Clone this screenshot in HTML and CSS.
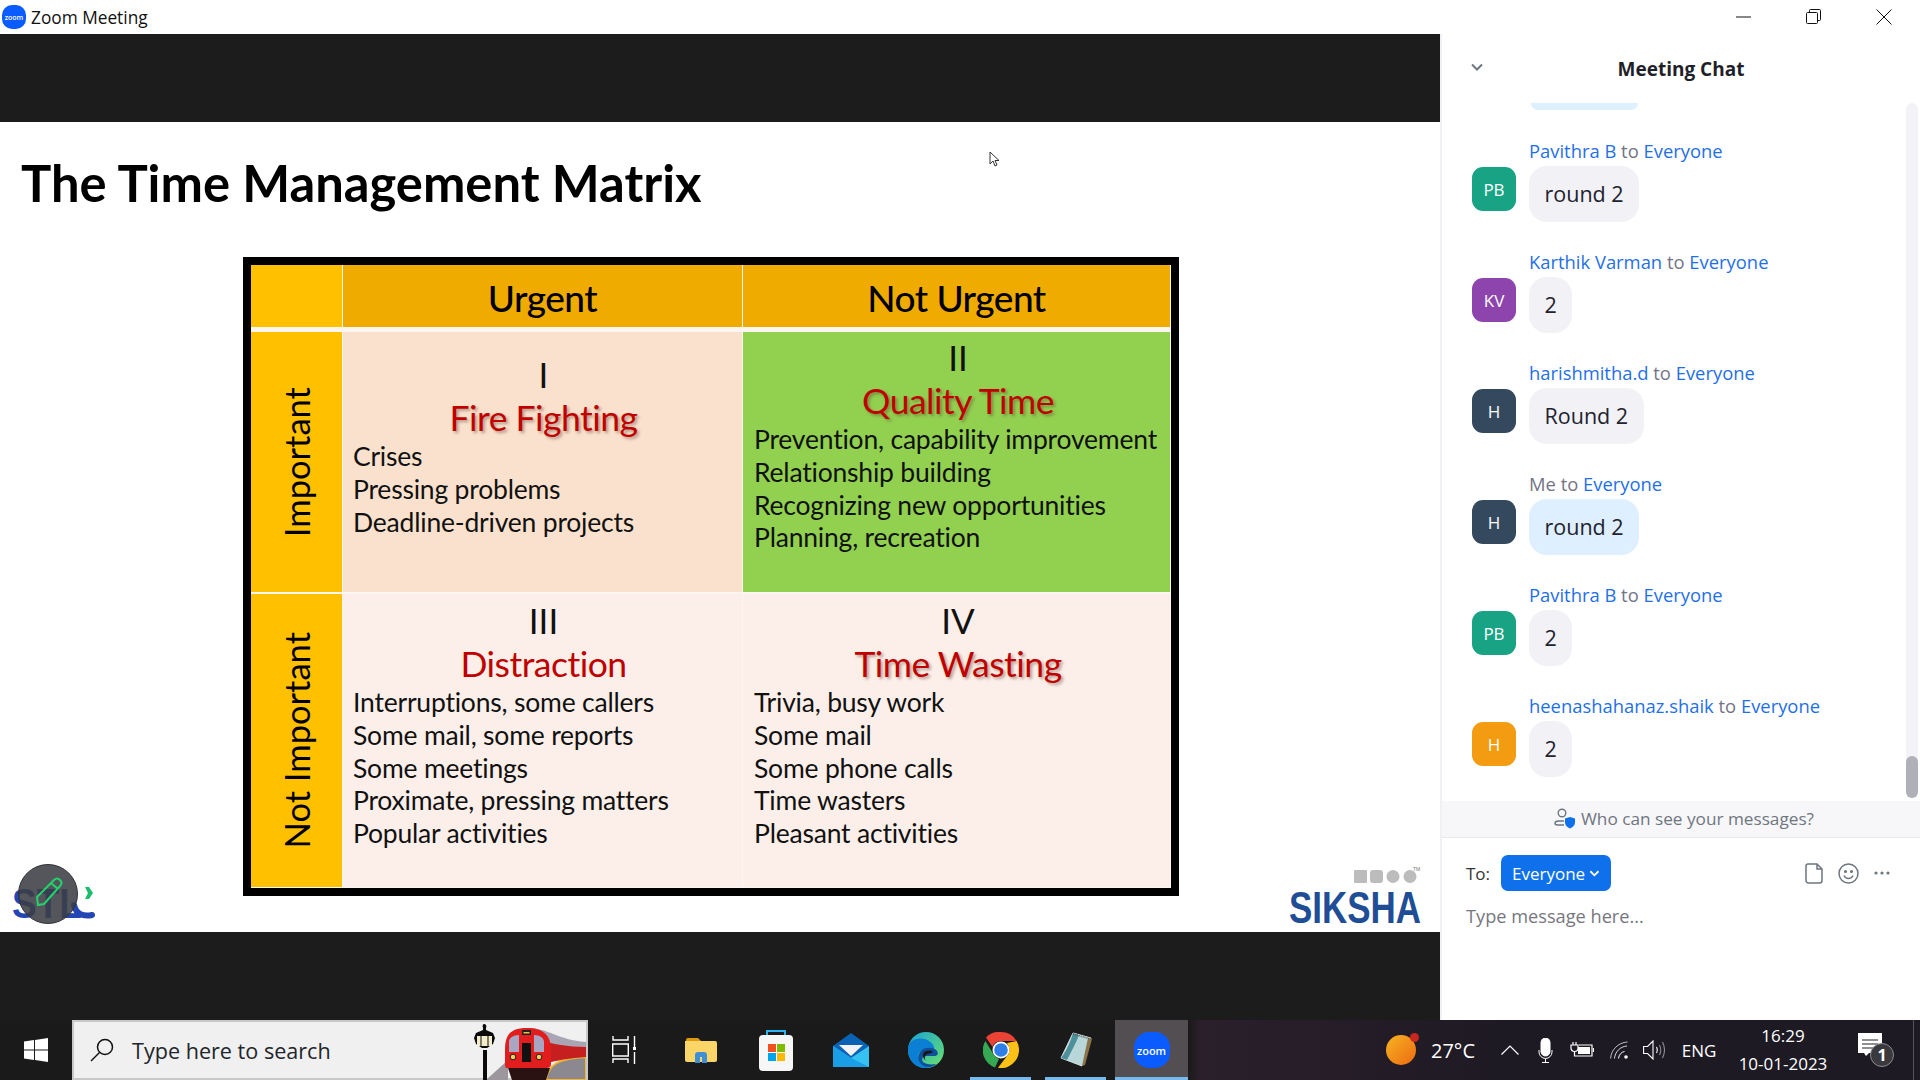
FILE: index.html
```html
<!DOCTYPE html>
<html lang="en"><head>
    <meta charset="UTF-8">
    <meta name="viewport" content="width=device-width, initial-scale=1.0">
    <title>Zoom Meeting</title>
    <link rel="stylesheet" href="styles.css">
</head>
<body>
<div class="app">
    <header class="titlebar">
        <div class="zoom-mark"><span>zoom</span></div>
        <span class="window-title">Zoom Meeting</span>
        <div class="window-controls">
            <button class="win-btn"><svg width="16" height="16" viewBox="0 0 16 16"><path d="M0 8h15" stroke="#111" stroke-width="1"/></svg></button>
            <button class="win-btn"><svg width="16" height="16" viewBox="0 0 16 16" fill="none" stroke="#111"><rect x="0.5" y="3.5" width="11" height="11" rx="1"/><path d="M3.5 3V1.5a1 1 0 0 1 1-1h9a1 1 0 0 1 1 1v9a1 1 0 0 1-1 1H12"/></svg></button>
            <button class="win-btn"><svg width="16" height="16" viewBox="0 0 16 16" fill="none" stroke="#111"><path d="M0.5 0.5l15 15M15.5 0.5l-15 15"/></svg></button>
        </div>
    </header>

    <main class="stage">
        <div class="black-band"></div>
        <section class="slide">
            <h1 class="slide-title">The Time Management Matrix</h1>
            <div class="matrix">
                <div class="corner"></div>
                <div class="col-head">Urgent</div>
                <div class="col-head">Not Urgent</div>

                <div class="row-head"><span>Important</span></div>
                <div class="cell cell-peach cell-one">
                    <div class="numeral">I</div>
                    <div class="quad-name shadowed">Fire Fighting</div>
                    <ul class="quad-list">
                        <li>Crises</li>
                        <li>Pressing problems</li>
                        <li>Deadline-driven projects</li>
                    </ul>
                </div>
                <div class="cell cell-green cell-right cell-two">
                    <div class="numeral">II</div>
                    <div class="quad-name shadowed">Quality Time</div>
                    <ul class="quad-list">
                        <li>Prevention, capability improvement</li>
                        <li>Relationship building</li>
                        <li>Recognizing new opportunities</li>
                        <li>Planning, recreation</li>
                    </ul>
                </div>

                <div class="row-head row-gap"><span>Not Important</span></div>
                <div class="cell cell-pale row-gap">
                    <div class="numeral">III</div>
                    <div class="quad-name">Distraction</div>
                    <ul class="quad-list">
                        <li>Interruptions, some callers</li>
                        <li>Some mail, some reports</li>
                        <li>Some meetings</li>
                        <li>Proximate, pressing matters</li>
                        <li>Popular activities</li>
                    </ul>
                </div>
                <div class="cell cell-pale cell-right row-gap">
                    <div class="numeral">IV</div>
                    <div class="quad-name shadowed">Time Wasting</div>
                    <ul class="quad-list">
                        <li>Trivia, busy work</li>
                        <li>Some mail</li>
                        <li>Some phone calls</li>
                        <li>Time wasters</li>
                        <li>Pleasant activities</li>
                    </ul>
                </div>
            </div>

            <!-- things sitting on top of the slide -->
            <svg class="mouse-pointer" width="12" height="16" viewBox="0 0 12 16"><path d="M1 1v12l3-3 2 5 2-1-2-4.500h4z" fill="#fff" stroke="#333" stroke-width="1"/></svg>
            <svg class="stl-logo" width="90" height="72" viewBox="0 0 90 72">
                <text x="2" y="63" class="stl-text" textLength="70" lengthAdjust="spacingAndGlyphs">STL</text>
                <path d="M64 50c2 9 9 12 18 10" fill="none" stroke="#2346b5" stroke-width="6" stroke-linecap="round"/>
                <path d="M75 32h4l4 6-4 6h-4l3-6z" fill="#19bd6b"/>
                <circle cx="38" cy="39" r="29.500" fill="#3c3f44" fill-opacity="0.88" stroke="#2f3236"/>
                <path d="M28 50l-1-8 17-17c2-2 4-2 6 0s2 4 0 6L34 49zM41 28l7 6" fill="none" stroke="#22d36d" stroke-width="2"/>
            </svg>
            <svg class="siksha-logo" width="136" height="68" viewBox="0 0 136 68">
                <rect x="66" y="9" width="13" height="13" rx="1" fill="#bcbcbc"/>
                <rect x="82" y="9" width="13" height="13" rx="3" fill="#bcbcbc"/>
                <ellipse cx="105" cy="15.500" rx="6.500" ry="6.500" fill="#bcbcbc"/>
                <ellipse cx="122" cy="15.500" rx="6.500" ry="6.500" fill="#bcbcbc"/>
                <text x="125" y="10" class="tm-text">TM</text>
                <text x="1" y="62" class="siksha-text" textLength="132" lengthAdjust="spacingAndGlyphs">SIKSHA</text>
            </svg>
        </section>
        <div class="black-band"></div>
    </main>

    <aside class="chat">
        <div class="chat-head">
            <svg class="chat-collapse" width="12" height="8" viewBox="0 0 12 8"><path d="M1 1.500l5 5 5-5" fill="none" stroke="#6e7680" stroke-width="2"/></svg>
            <h2 class="chat-title">Meeting Chat</h2>
        </div>
        <div class="chat-body">
            <div class="messages">
                <div class="bubble-cut"></div>
                <div class="msg">
                    <div class="sender"><b>Pavithra B</b> to <b>Everyone</b></div>
                    <div class="avatar av-green">PB</div>
                    <div class="bubble">round 2</div>
                </div>
                <div class="msg">
                    <div class="sender"><b>Karthik Varman</b> to <b>Everyone</b></div>
                    <div class="avatar av-purple">KV</div>
                    <div class="bubble">2</div>
                </div>
                <div class="msg">
                    <div class="sender"><b>harishmitha.d</b> to <b>Everyone</b></div>
                    <div class="avatar av-navy">H</div>
                    <div class="bubble">Round 2</div>
                </div>
                <div class="msg">
                    <div class="sender">Me to <b>Everyone</b></div>
                    <div class="avatar av-navy">H</div>
                    <div class="bubble bubble-mine">round 2</div>
                </div>
                <div class="msg">
                    <div class="sender"><b>Pavithra B</b> to <b>Everyone</b></div>
                    <div class="avatar av-green">PB</div>
                    <div class="bubble">2</div>
                </div>
                <div class="msg">
                    <div class="sender"><b>heenashahanaz.shaik</b> to <b>Everyone</b></div>
                    <div class="avatar av-orange">H</div>
                    <div class="bubble">2</div>
                </div>
            </div>
            <div class="scroll-track"><div class="scroll-thumb"></div></div>
        </div>
        <div class="who-bar">
            <svg width="22" height="22" viewBox="0 0 22 22" fill="none"><circle cx="8" cy="6" r="3.800" stroke="#6e7680" stroke-width="1.400"/><path d="M10 14H4.500C2 14 1 15.500 1 16.500S2 18 4 18h6" stroke="#6e7680" stroke-width="1.400"/><path d="M16 10l5 1.500v4c0 3-2.500 5-5 6-2.500-1-5-3-5-6v-4z" fill="#0e71eb"/></svg>
            <span>Who can see your messages?</span>
        </div>
        <div class="compose">
            <div class="compose-row">
                <span class="to-label">To:</span>
                <button class="to-btn">Everyone
                    <svg width="13" height="9" viewBox="0 0 12 8"><path d="M1.500 1.500L6 6l4.500-4.500" fill="none" stroke="#fff" stroke-width="2"/></svg>
                </button>
                <div class="compose-tools">
                    <svg width="18" height="21" viewBox="0 0 18 21" fill="none" stroke="#6e7680" stroke-width="1.500"><path d="M3 1h9l5 5v11.500a2.500 2.500 0 0 1-2.500 2.500h-11A2.500 2.500 0 0 1 1 17.500V3a2 2 0 0 1 2-2zM12 1v5h5"/></svg>
                    <svg width="21" height="21" viewBox="0 0 21 21" fill="none" stroke="#6e7680" stroke-width="1.500"><circle cx="10.500" cy="10.500" r="9.500"/><circle cx="7.500" cy="8.500" r="0.800" fill="#6e7680"/><circle cx="13.500" cy="8.500" r="0.800" fill="#6e7680"/><path d="M6 12.500c1 2.500 3 3 4.500 3s3.500-.5 4.500-3"/></svg>
                    <svg width="16" height="4" viewBox="0 0 16 4" fill="#6e7680"><circle cx="2" cy="2" r="1.600"/><circle cx="8" cy="2" r="1.600"/><circle cx="14" cy="2" r="1.600"/></svg>
                </div>
            </div>
            <div class="placeholder">Type message here...</div>
        </div>
    </aside>

    <footer class="taskbar">
        <div class="start">
            <svg width="24" height="24" viewBox="0 0 24 24" fill="#fff"><path d="M0 3.400l10-1.400v9.500H0zM11 1.900L24 0v11.500H11zM0 12.500h10V22L0 20.600zM11 12.500h13V24l-13-1.900z"/></svg>
        </div>
        <div class="search">
            <svg class="search-glass" width="24" height="24" viewBox="0 0 24 24" fill="none" stroke="#111" stroke-width="1.500"><circle cx="15" cy="9" r="7.500"/><path d="M9.500 14.500L1 23"/></svg>
            <span>Type here to search</span>
            <svg class="search-art" width="120" height="58" viewBox="468 1022 120 58">
                <path d="M488 1080l22-20v20z" fill="#9b979c"/>
                <path d="M548 1080c2-15 12-22 40-23v23z" fill="#8c8890" stroke="#f0b72a" stroke-width="2"/>
                <path d="M530 1028c20 0 30 12 58 14v6h-50z" fill="#a9a5b4"/>
                <path d="M540 1040c15 4 30 7 48 7v10c-15 1-30 3-45 8z" fill="#c51f1f"/>
                <path d="M507 1050c0-15 5-22 22-22s24 8 24 22v14c0 3-2 4-4 4h-40c-2 0-2-2-2-4z" fill="#e11d1d"/>
                <path d="M511 1052v-10c0-4 4-7 10-7v17zM536 1035c6 0 10 3 10 7v10h-10z" fill="#a9a6c4"/>
                <rect x="524" y="1043" width="9" height="19" fill="#111"/>
                <rect x="524" y="1030" width="9" height="5" fill="#222"/>
                <rect x="525.500" y="1032" width="6" height="1.500" fill="#e8c04a"/>
                <circle cx="515" cy="1057" r="2.800" fill="#f3cf5a" stroke="#222"/>
                <circle cx="541" cy="1057" r="2.800" fill="#f3cf5a" stroke="#222"/>
                <path d="M510 1068h42l-4 12h-34z" fill="#2a1212"/>
                <rect x="485" y="1050" width="4" height="30" fill="#0a0a0a"/>
                <path d="M486 1024c2 0 3 2 2 4v2l7 3 2 5-2 6-6 4h-5l-6-4-2-6 2-5 7-3v-2c-1-2 0-4 1-4z" fill="#0a0a0a"/>
                <path d="M479 1036h15v10h-15z" fill="#f2eccb"/>
                <path d="M483 1035v12M490 1035v12" stroke="#0a0a0a"/>
            </svg>
        </div>
        <div class="task-view">
            <svg width="24" height="28" viewBox="0 0 24 28" fill="none" stroke="#fff" stroke-width="1.400"><path d="M1 0v4h15V0M1 27v-4h15v4M.7 8h15.600v12H.7zM22.500 0v11M22.500 16v12"/><rect x="21" y="11" width="3" height="3" fill="#fff" stroke="none"/></svg>
        </div>
        <div class="task">
            <svg width="32" height="26" viewBox="0 0 32 26"><path d="M1 3a2 2 0 0 1 2-2h10l3 3H1z" fill="#dd9c0f"/><path d="M0 4h30a2 2 0 0 1 2 2v17a2 2 0 0 1-2 2H2a2 2 0 0 1-2-2z" fill="#fbd568"/><path d="M10 26v-8a3 3 0 0 1 3-3h6a3 3 0 0 1 3 3v8h-5v-6h-2v6z" fill="#3f8fd6"/></svg>
        </div>
        <div class="task">
            <svg width="36" height="42" viewBox="0 0 36 42"><path d="M9 9V2h18v7" fill="none" stroke="#2cb3f0" stroke-width="2"/><rect x="1" y="6" width="34" height="36" rx="4" fill="#f7f7f7"/><rect x="10" y="15" width="8" height="8" fill="#f25022"/><rect x="19" y="15" width="8" height="8" fill="#7fba00"/><rect x="10" y="24" width="8" height="8" fill="#00a4ef"/><rect x="19" y="24" width="8" height="8" fill="#ffb900"/></svg>
        </div>
        <div class="task">
            <svg width="36" height="34" viewBox="0 0 36 34"><path d="M0 13L18 0l18 13v21H0z" fill="#0a62b5"/><path d="M6 12h24l-12 11z" fill="#f3f3f3"/><path d="M0 13l18 12 18-12v21H0z" fill="#35c1f1"/><path d="M0 34V13l18 12 18 9z" fill="#1a9ee6"/></svg>
        </div>
        <div class="task">
            <svg width="36" height="36" viewBox="0 0 36 36"><defs><linearGradient id="edge-top" x1="0" y1="0" x2="1" y2="1"><stop offset="0" stop-color="#1aa3d8"/><stop offset="1" stop-color="#6be26a"/></linearGradient></defs><circle cx="18" cy="18" r="18" fill="url(#edge-top)"/><path d="M0 18C0 8 9 5 17 7c8 3 11 9 8 11-3 1-7 0-12 1-4 2-3 8 1 12 3 3 9 3 14 1-3 3-7 4-11 4C7 36 0 28 0 18z" fill="#0b7fd3"/><path d="M14 18c4-3 12-3 15 1 2 3 0 5-3 5h-8c-3 0-5 3-3 6 2 2 8 3 13 2-4 4-11 4-15 0-4-5-3-11 1-14z" fill="#0f4f9c"/><path d="M16 20c3-2 7-2 9 0-2 2-5 1-7 3-1 1-2 4 0 6-3-2-4-7-2-9z" fill="#1a1a1a"/></svg>
        </div>
        <div class="task running">
            <svg width="36" height="36" viewBox="0 0 36 36"><path d="M18 0a18 18 0 0 1 15.600 9H18a9 9 0 0 0-8.500 6L3 5.500A18 18 0 0 1 18 0z" fill="#ea4335"/><path d="M2.400 9L11 23a9 9 0 0 0 5 4l-4 8.500A18 18 0 0 1 2.400 9z" fill="#34a853"/><path d="M33.600 9A18 18 0 0 1 15 35.800L24 24a9 9 0 0 0 1-11 9 9 0 0 0-1-2z" fill="#fbc116"/><circle cx="18" cy="18" r="8.500" fill="#fff"/><circle cx="18" cy="18" r="6.800" fill="#2f7de8"/></svg>
        </div>
        <div class="task running">
            <svg width="34" height="36" viewBox="0 0 34 36"><path d="M14 1l18 5-9 28-21-8z" fill="#b9d7d8" stroke="#d8e2e2"/><path d="M29 6l4 1-7 26-3 1z" fill="#8a7348"/><path d="M2 26C8 18 12 8 14 1l6 2c-3 8-8 17-12 25z" fill="#4d8f9a"/><path d="M14 2l18 5" stroke="#555" stroke-width="1.500" stroke-dasharray="1 1"/></svg>
        </div>
        <div class="task running task-active">
            <div class="zoom-tile"><span>zoom</span></div>
        </div>
        <div class="tray">
            <div class="tray-slot"><div class="sun"></div></div>
            <div class="tray-slot temp">27°C</div>
            <div class="tray-slot"><svg width="18" height="10" viewBox="0 0 18 10"><path d="M.5 9.500L9 1l8.500 8.500" fill="none" stroke="#fff" stroke-width="1.200"/></svg></div>
            <div class="tray-slot"><svg width="15" height="25" viewBox="0 0 15 25" fill="none" stroke="#fff"><rect x="3" y="0" width="9" height="18" rx="4.500" fill="#fff"/><path d="M1 12v2a6.500 6.500 0 0 0 13 0v-2M7.500 20.500V24M4 24.500h7"/></svg></div>
            <div class="tray-slot"><svg width="24" height="16" viewBox="0 0 24 16" fill="none" stroke="#fff" stroke-width="1.200"><path d="M3 0v3M6 0v3M1 3h7v3a3.500 3.500 0 0 1-7 0zM4.500 9.500V14H22V3H9"/><rect x="8" y="5" width="12" height="7" fill="#fff" stroke="none"/><path d="M23.500 6v4"/></svg></div>
            <div class="tray-slot"><svg width="18" height="18" viewBox="0 0 18 18" fill="none" stroke="#fff"><path d="M.6 17.500C1 9 8 1.500 17.500 1" opacity="0.7"/><path d="M4.500 17.500C5 11 10 5.500 17 5" opacity="0.8"/><path d="M8.500 17.500c.5-4 3-6.500 6-7"/><circle cx="16" cy="16" r="1.800" fill="#fff" stroke="none"/></svg></div>
            <div class="tray-slot"><svg width="22" height="20" viewBox="0 0 22 20" fill="none" stroke="#fff" stroke-width="1.100"><path d="M.6 6.500h4L10 1v18l-5.400-5.500h-4zM13.500 7c1 2 1 4 0 6"/><path d="M16.500 5c1.500 3 1.500 7 0 10M19.500 2c2.500 5 2.500 11 0 16" opacity="0.5"/></svg></div>
            <div class="tray-slot lang">ENG</div>
            <div class="tray-slot clock"><div>16:29</div><div>10-01-2023</div></div>
            <div class="tray-slot notes">
                <svg width="36" height="36" viewBox="0 0 36 36"><path d="M0 1h24v20H11l-3 3-2-3H0z" fill="#fff"/><path d="M4 8h16M4 12h16M4 16h12" stroke="#222" stroke-width="1.200"/><circle cx="24" cy="23" r="11.500" fill="#3a3a3e" stroke="#8c8c8c"/><text x="24" y="29" class="badge-num">1</text></svg>
            </div>
            <div class="tray-edge"></div>
        </div>
    </footer>
</div>
</body>
</html>
```

FILE: styles.css
```css
* {
    box-sizing: border-box;
}
body {
    margin: 0;
    width: 1920px;
    height: 1080px;
    overflow: hidden;
    background: #fff;
    font-family: "Open Sans", sans-serif;
}
.app {
    display: grid;
    grid-template-columns: 1440px 480px;
    grid-template-rows: 34px 986px 60px;
    height: 1080px;
}

/* title bar */
.titlebar {
    grid-column: span 2;
    display: flex;
    align-items: center;
    padding-left: 2px;
    background: #fff;
}
.zoom-mark {
    width: 24px;
    height: 24px;
    border-radius: 10px;
    background: #0b5cff;
    display: flex;
    align-items: center;
    justify-content: center;
}
.zoom-mark span {
    color: #fff;
    font-size: 7px;
    font-weight: 600;
}
.window-title {
    margin-left: 5px;
    font-size: 17.300px;
    color: #111;
}
.window-controls {
    display: flex;
    margin-left: auto;
    padding-right: 1px;
}
.win-btn {
    width: 70px;
    height: 34px;
    padding: 0;
    border: none;
    background: none;
    display: flex;
    align-items: center;
    justify-content: center;
}

/* slide */
.stage {
    display: flex;
    flex-direction: column;
}
.black-band {
    height: 88px;
    background: #1c1c1c;
}
.slide {
    position: relative;
    height: 810px;
    background: #fff;
    padding-top: 29px;
}
.slide-title {
    margin: 0 0 0 21px;
    height: 106px;
    line-height: 64px;
    font-family: Lato, sans-serif;
    font-size: 50.700px;
    font-weight: 700;
    color: #000;
}
.matrix {
    display: grid;
    grid-template-columns: 91px 399px 427px;
    grid-template-rows: 67px 260px 295px;
    column-gap: 1px;
    width: 936px;
    height: 639px;
    margin-left: 243px;
    border: 8px solid #000;
    background: #fdf6f0;
    font-family: Lato, sans-serif;
    color: #111;
}
.corner,
.col-head {
    height: 62px;
}
.corner {
    background: #ffc000;
}
.col-head {
    display: flex;
    align-items: center;
    justify-content: center;
    padding-top: 2px;
    background: #f0ab00;
    font-size: 37px;
    font-weight: 500;
    letter-spacing: -0.5px;
    color: #000;
}
.row-head {
    display: flex;
    align-items: center;
    justify-content: center;
    background: #ffc000;
}
.row-head span {
    writing-mode: vertical-rl;
    transform: rotate(180deg);
    font-size: 34.500px;
    color: #000;
}
.row-gap {
    margin-top: 2px;
}
.cell {
    padding: 4px 8px 0 10px;
}
.cell-right {
    padding-left: 11px;
}
.cell-one {
    padding-top: 20px;
}
.cell-two {
    padding-top: 3px;
}
.cell-peach {
    background: #fae1cd;
}
.cell-green {
    background: #92d050;
}
.cell-pale {
    background: #fcefe9;
}
.numeral {
    height: 44px;
    line-height: 44px;
    text-align: center;
    font-size: 35px;
}
.quad-name {
    height: 44px;
    line-height: 44px;
    text-align: center;
    font-size: 35.500px;
    letter-spacing: -0.5px;
    color: #c00000;
}
.shadowed {
    text-shadow: 2px 2px 3px rgba(90, 60, 40, 0.45);
}
.quad-list {
    list-style: none;
    margin: 0;
    padding: 0;
}
.quad-list li {
    height: 32.800px;
    line-height: 32px;
    font-size: 26.500px;
    letter-spacing: -0.2px;
    white-space: nowrap;
}
.mouse-pointer {
    position: absolute;
    left: 989px;
    top: 29px;
}
.stl-logo {
    position: absolute;
    left: 10px;
    top: 733px;
}
.stl-text {
    font-family: "Liberation Sans", sans-serif;
    font-size: 43px;
    font-weight: 700;
    fill: #2346b5;
}
.siksha-logo {
    position: absolute;
    left: 1288px;
    top: 739px;
}
.siksha-text {
    font-family: "Liberation Sans", sans-serif;
    font-size: 45px;
    font-weight: 700;
    fill: #1f4e96;
}
.tm-text {
    font-family: "Liberation Sans", sans-serif;
    font-size: 5px;
    fill: #777;
}

/* chat panel */
.chat {
    display: flex;
    flex-direction: column;
    border-left: 2px solid #f0f0f5;
    background: #fff;
    height: 986px;
    min-width: 0;
}
.chat-head {
    position: relative;
    height: 69px;
    display: flex;
    align-items: center;
    justify-content: center;
}
.chat-collapse {
    position: absolute;
    left: 29px;
    top: 29px;
}
.chat-title {
    margin: 0;
    font-size: 19px;
    font-weight: 700;
    color: #1f1f2a;
}
.chat-body {
    display: flex;
    height: 698px;
}
.messages {
    flex: 1;
    overflow: hidden;
    padding-left: 30px;
}
.bubble-cut {
    width: 107px;
    height: 7px;
    margin: 0 0 28px 59px;
    background: #deefff;
    border-radius: 0 0 18px 18px;
}
.msg {
    display: grid;
    grid-template-columns: 44px auto;
    column-gap: 13px;
    justify-content: start;
    margin-bottom: 27px;
}
.sender {
    grid-column: 2;
    height: 28px;
    line-height: 26px;
    font-size: 18.400px;
    color: #747487;
    white-space: nowrap;
}
.sender b {
    font-weight: 400;
    color: #1f6fe8;
}
.avatar {
    width: 44px;
    height: 44px;
    margin-top: 1px;
    border-radius: 11px;
    display: flex;
    align-items: center;
    justify-content: center;
    font-size: 17px;
    color: #fff;
}
.av-green {
    background: #17a384;
}
.av-purple {
    background: #8e44ad;
}
.av-navy {
    background: #34495e;
}
.av-orange {
    background: #f39c12;
}
.bubble {
    justify-self: start;
    height: 56px;
    line-height: 56px;
    padding: 0 15.500px;
    border-radius: 18px;
    background: #f1f1f6;
    font-size: 21.500px;
    color: #222230;
}
.bubble-mine {
    background: #deefff;
}
.scroll-track {
    display: flex;
    align-items: flex-end;
    width: 12px;
    height: 695px;
    margin-right: 2px;
    border-radius: 6px;
    background: #f2f2f7;
}
.scroll-thumb {
    width: 12px;
    height: 42px;
    border-radius: 6px;
    background: #b0b0b8;
}
.who-bar {
    display: flex;
    align-items: center;
    justify-content: center;
    gap: 5px;
    height: 37px;
    padding: 0 0 2px 6px;
    background: #f7f7fa;
    border-bottom: 1px solid #e8e8ee;
    font-size: 17.200px;
    color: #6e7680;
}
.compose {
    padding: 17px 30px 0 24px;
}
.compose-row {
    display: flex;
    align-items: center;
    height: 36px;
}
.to-label {
    width: 35px;
    font-size: 17px;
    color: #333;
}
.to-btn {
    display: flex;
    align-items: center;
    gap: 4px;
    width: 110px;
    height: 36px;
    padding: 0 11px;
    border: none;
    border-radius: 7px;
    background: #0e71eb;
    font-family: inherit;
    font-size: 17px;
    color: #fff;
    white-space: nowrap;
}
.compose-tools {
    display: flex;
    align-items: center;
    gap: 15px;
    margin-left: auto;
}
.placeholder {
    margin-top: 12px;
    line-height: 26px;
    font-size: 18.200px;
    color: #77777f;
}

/* taskbar */
.taskbar {
    grid-column: span 2;
    display: flex;
    align-items: stretch;
    background: linear-gradient(90deg, #1a1a1a 0, #1a1a1a 1188px, #2b1f2c 1200px, #1e1a24 1500px);
}
.start {
    width: 72px;
    display: flex;
    align-items: center;
    justify-content: center;
}
.search {
    position: relative;
    display: flex;
    align-items: center;
    width: 516px;
    padding-left: 16px;
    background: #f0f0f0;
    border: 2px solid #c8c8c8;
    font-size: 21.600px;
    color: #22252b;
}
.search-glass {
    margin-right: 18px;
}
.search-art {
    position: absolute;
    right: 0;
    top: 0;
}
.task-view {
    width: 72px;
    display: flex;
    align-items: center;
    justify-content: center;
    margin-right: 3px;
}
.task {
    position: relative;
    width: 75px;
    display: flex;
    align-items: center;
    justify-content: center;
}
.running::after {
    content: "";
    position: absolute;
    bottom: 0;
    left: 7px;
    width: 61px;
    height: 3px;
    background: #76b9ed;
}
.task-active {
    width: 73px;
    margin-left: 2px;
    background: #534e52;
}
.task-active::after {
    left: 0;
    width: 73px;
}
.zoom-tile {
    width: 36px;
    height: 36px;
    border-radius: 15px;
    background: #0b5cff;
    display: flex;
    align-items: center;
    justify-content: center;
}
.zoom-tile span {
    color: #fff;
    font-size: 11px;
    font-weight: 600;
}
.tray {
    display: grid;
    grid-template-columns: 42px 62px 52px 19px 54px 20px 50px 40px 128px 58px 1px;
    margin-left: 192px;
    color: #fff;
}
.tray-slot {
    display: flex;
    align-items: center;
    justify-content: center;
}
.sun {
    position: relative;
    width: 30px;
    height: 30px;
    border-radius: 50%;
    background: linear-gradient(135deg, #f6b423, #ee6a10);
}
.sun::after {
    content: "";
    position: absolute;
    right: -3px;
    top: -2px;
    width: 9px;
    height: 9px;
    border-radius: 50%;
    background: #c8261e;
}
.temp {
    font-size: 20px;
}
.lang {
    font-size: 17px;
}
.clock {
    flex-direction: column;
    gap: 4px;
    font-size: 17px;
    line-height: 24px;
}
.badge-num {
    font-family: "Open Sans", sans-serif;
    font-size: 16px;
    font-weight: 700;
    text-anchor: middle;
    fill: #fff;
}
.tray-edge {
    margin-left: 8px;
    width: 1px;
    background: #55525a;
}
```
